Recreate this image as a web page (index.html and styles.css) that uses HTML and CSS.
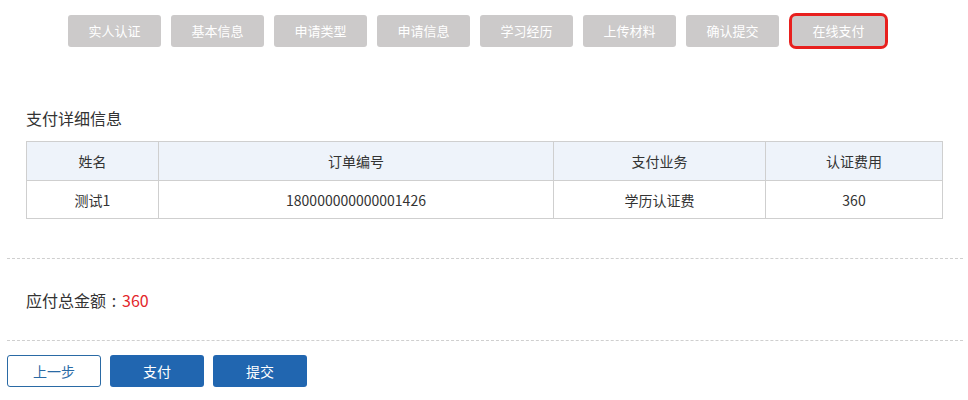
FILE: index.html
```html
<!DOCTYPE html>
<html lang="zh-CN">
<head>
    <meta charset="UTF-8">
    <title>在线支付</title>
    <link rel="stylesheet" href="styles.css">
</head>
<body>

    <div class="steps">
        <span class="step">实人认证</span>
        <span class="step">基本信息</span>
        <span class="step">申请类型</span>
        <span class="step">申请信息</span>
        <span class="step">学习经历</span>
        <span class="step">上传材料</span>
        <span class="step">确认提交</span>
        <span class="step active">在线支付</span>
    </div>

    <div class="pay-info">
        <h3 class="sec-title">支付详细信息</h3>
        <table class="pay-table">
            <thead>
                <tr>
                    <th class="col-name">姓名</th>
                    <th class="col-order">订单编号</th>
                    <th class="col-biz">支付业务</th>
                    <th>认证费用</th>
                </tr>
            </thead>
            <tbody>
                <tr>
                    <td>测试1</td>
                    <td>180000000000001426</td>
                    <td>学历认证费</td>
                    <td>360</td>
                </tr>
            </tbody>
        </table>
    </div>

    <div class="dash"></div>

    <div class="total">应付总金额<span class="colon">:</span><span class="amount">360</span></div>

    <div class="dash"></div>

    <div class="actions">
        <button class="btn btn-outline">上一步</button>
        <button class="btn btn-primary">支付</button>
        <button class="btn btn-primary">提交</button>
    </div>

</body>
</html>
```

FILE: styles.css
```css
* {
    margin: 0;
    padding: 0;
    box-sizing: border-box;
    font-family: "Noto Sans CJK SC", "Liberation Sans", sans-serif;
}

body {
    background: #fff;
    color: #333;
    width: 968px;
}

/* Steps */
.steps {
    display: flex;
    gap: 10px;
    padding-left: 68px;
    margin-top: 15px;
}

.step {
    width: 93px;
    height: 32px;
    line-height: 32px;
    text-align: center;
    background: #cccaca;
    color: #fff;
    font-size: 13px;
    border-radius: 3px;
}

.step.active {
    box-shadow: 0 0 0 3px #e8201e;
    border-radius: 4px;
    margin-left: 3px;
    height: 30px;
    line-height: 30px;
    margin-top: 1px;
}

/* Pay info */
.pay-info {
    padding: 0 25px 0 26px;
    margin-top: 60px;
}

.sec-title {
    font-size: 16px;
    font-weight: normal;
    line-height: 22px;
    color: #333;
    margin-bottom: 12px;
}

.pay-table {
    width: 917px;
    border-collapse: collapse;
    font-size: 14px;
    color: #333;
}

.pay-table th,
.pay-table td {
    border: 1px solid #cfcfcf;
    text-align: center;
    font-weight: normal;
}

.pay-table th {
    background: #eef3fa;
    height: 39px;
}

.pay-table td {
    height: 38px;
}

.col-name { width: 132px; }
.col-order { width: 395px; }
.col-biz { width: 212px; }

.dash {
    margin: 39px 5px 0 7px;
    border-top: 1px dashed #cfcfcf;
}

.total {
    padding-left: 26px;
    font-size: 16px;
    line-height: 22px;
    margin: 30px 0 29px;
}

.total + .dash {
    margin-top: 0;
}

.colon {
    display: inline-block;
    width: 16px;
    text-align: center;
}

.amount {
    color: #e3262a;
}

/* Buttons */
.actions {
    display: flex;
    gap: 9px;
    padding-left: 7px;
    margin-top: 14px;
}

.btn {
    width: 94px;
    height: 32px;
    font-size: 14px;
    border-radius: 3px;
    cursor: pointer;
}

.btn-outline {
    background: #fff;
    border: 1px solid #2a6aa5;
    color: #2a6aa5;
}

.btn-primary {
    background: #2166b0;
    border: none;
    color: #fff;
}
```
